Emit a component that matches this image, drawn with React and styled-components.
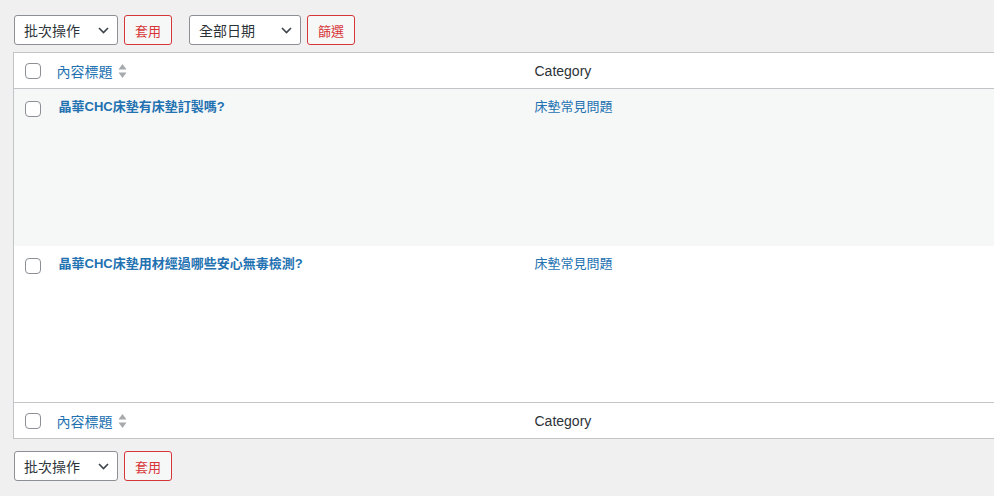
import React from 'react'
import styled, { createGlobalStyle } from 'styled-components'

const GlobalStyle = createGlobalStyle`
  html, body {
    margin: 0;
    padding: 0;
    background: #f0f0f1;
    overflow: hidden;
  }
  body {
    font-family: "Liberation Sans", "Noto Sans CJK TC", sans-serif;
    color: #3c434a;
    font-size: 13px;
  }
`

const Page = styled.div`
  padding: 15px 0 0 13px;
`

const Toolbar = styled.div`
  display: flex;
  align-items: center;
  height: 30px;
  margin-left: 1px;
  margin-top: ${props => props.top || 0}px;
`

const Group = styled.div`
  display: flex;
  align-items: center;
  gap: 6px;
  margin-right: 17px;
`

const SelectBox = styled.div`
  box-sizing: border-box;
  width: ${props => props.width}px;
  height: 30px;
  border: 1px solid #8c8f94;
  border-radius: 3px;
  background: #fff;
  display: flex;
  align-items: center;
  justify-content: space-between;
  padding: 0 8px 0 9px;
  font-size: 14px;
  color: #2c3338;
`

const ActionButton = styled.button`
  box-sizing: border-box;
  width: 48px;
  height: 30px;
  border: 1px solid #d63638;
  border-radius: 3px;
  background: #f6f7f7;
  color: #d63638;
  font-family: inherit;
  font-size: 13px;
  padding: 0;
  cursor: pointer;
`

const Table = styled.table`
  width: 1000px;
  margin-top: 7px;
  border-collapse: collapse;
  border: 1px solid #c3c4c7;
  background: #fff;
  table-layout: fixed;
`

const HeadCell = styled.th`
  height: 35px;
  padding: 0 0 0 ${props => props.pad || 10}px;
  text-align: left;
  font-weight: normal;
  font-size: 14px;
  color: #2c3338;
  vertical-align: middle;
  border-${props => props.edge}: 1px solid #c3c4c7;
`

const Row = styled.tr`
  background: ${props => props.bg};
`

const Cell = styled.td`
  height: ${props => props.h}px;
  padding: 12px 0 0 ${props => props.pad || 10}px;
  vertical-align: top;
  box-sizing: border-box;
`

const Check = styled.span`
  display: block;
  box-sizing: border-box;
  width: 16px;
  height: 16px;
  border: 1px solid #8c8f94;
  border-radius: 4px;
  background: #fff;
`

const SortLink = styled.a`
  display: inline-flex;
  align-items: center;
  gap: 5px;
  color: #2271b1;
  text-decoration: none;
`

const TitleLink = styled.a`
  display: block;
  margin-top: -2px;
  line-height: 16px;
  font-size: 13px;
  font-weight: bold;
  color: #2271b1;
  text-decoration: none;
`

const CatLink = styled.a`
  display: block;
  margin-top: -2px;
  line-height: 16px;
  font-size: 13px;
  color: #2271b1;
  text-decoration: none;
`

const Chevron = () => (
  <svg width="11" height="7" viewBox="0 0 11 7">
    <path d="M1 1l4.5 4.5L10 1" fill="none" stroke="#3c434a" strokeWidth="1.6" />
  </svg>
)

const SortIcon = () => (
  <svg width="9" height="18" viewBox="0 0 9 18">
    <path d="M0.5 7.5L4.5 2l4 5.5z" fill="#a7aaad" />
    <path d="M0.5 10.5L4.5 16l4-5.5z" fill="#a7aaad" />
  </svg>
)

const posts = [
  { id: 1, title: '晶華CHC床墊有床墊訂製嗎?', category: '床墊常見問題', bg: '#f6f7f7', h: 157 },
  { id: 2, title: '晶華CHC床墊用材經過哪些安心無毒檢測?', category: '床墊常見問題', bg: '#fff', h: 157 },
]

const HeaderRow = ({ edge }) => (
  <tr>
    <HeadCell pad={11} edge={edge}><Check /></HeadCell>
    <HeadCell edge={edge}>
      <SortLink href="#">內容標題<SortIcon /></SortLink>
    </HeadCell>
    <HeadCell edge={edge}>Category</HeadCell>
  </tr>
)

const BulkActions = () => (
  <Group>
    <SelectBox width={104}>批次操作<Chevron /></SelectBox>
    <ActionButton>套用</ActionButton>
  </Group>
)

export default function App() {
  return (
    <Page>
      <GlobalStyle />
      <Toolbar>
        <BulkActions />
        <Group>
          <SelectBox width={112}>全部日期<Chevron /></SelectBox>
          <ActionButton>篩選</ActionButton>
        </Group>
      </Toolbar>
      <Table>
        <colgroup>
          <col style={{ width: 33 }} />
          <col style={{ width: 478 }} />
          <col />
        </colgroup>
        <thead>
          <HeaderRow edge="bottom" />
        </thead>
        <tbody>
          {posts.map(p => (
            <Row key={p.id} bg={p.bg}>
              <Cell h={p.h} pad={11}><Check /></Cell>
              <Cell h={p.h} pad={12}><TitleLink href="#">{p.title}</TitleLink></Cell>
              <Cell h={p.h}><CatLink href="#">{p.category}</CatLink></Cell>
            </Row>
          ))}
        </tbody>
        <tfoot>
          <HeaderRow edge="top" />
        </tfoot>
      </Table>
      <Toolbar top={12}>
        <BulkActions />
      </Toolbar>
    </Page>
  )
}
